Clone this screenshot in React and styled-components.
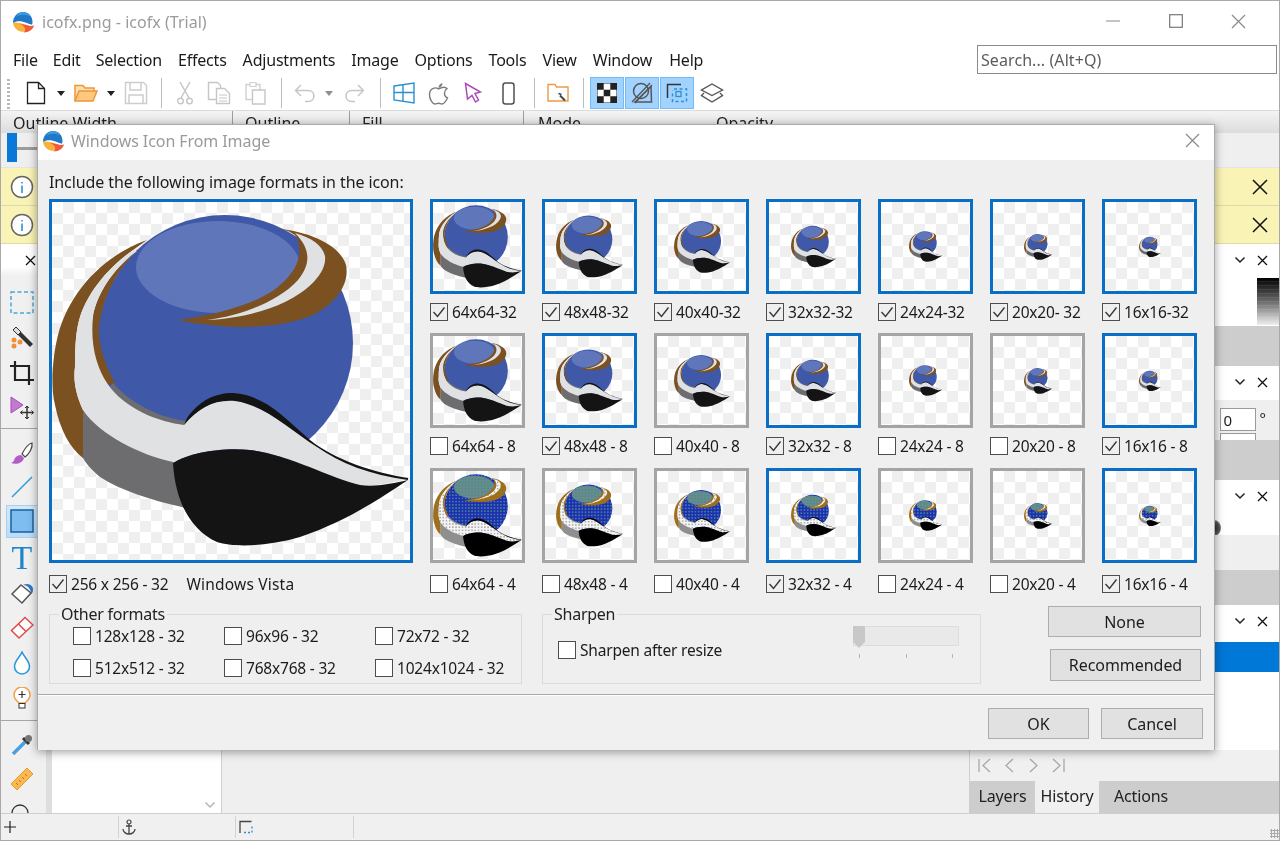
import React from "react";
import styled, { createGlobalStyle } from "styled-components";

const Global = createGlobalStyle`
  html, body { margin: 0; padding: 0; background: #fff; overflow: hidden; }
  body { font-family: "Noto Sans", "Open Sans", sans-serif; color: #1c1c1c; }
  * { box-sizing: border-box; }
`;

const Window = styled.div`
  position: relative; width: 1280px; height: 841px; display: flex; flex-direction: column;
  border: 1px solid #a9a9a9; overflow: hidden; background: #fff;
  filter: blur(0.4px);
`;
const TitleBar = styled.div`
  height: 41px; flex: none; display: flex; align-items: center; padding-left: 11px; padding-top: 1px;
`;
const TitleText = styled.span`
  margin-left: 8px; font-size: 16px; color: #9b9b9b; letter-spacing: 0.03px;
`;
const WinControls = styled.div`margin-left: auto; display: flex; align-items: center; margin-top: -2px;`;
const WinControl = styled.div`
  width: 63px; display: flex; justify-content: center; align-items: center;
`;
const WinSpacer = styled.div`width: 9px;`;
const MenuRow = styled.div`
  height: 35px; flex: none; display: flex; align-items: center; padding-left: 12px;
`;
const MenuItem = styled.span`
  font-size: 16px; margin-right: ${p => p.$gap}px; color: #1a1a1a; letter-spacing: -0.2px;
`;
const SearchBox = styled.div`
  margin-left: auto; margin-right: 2px; width: 300px; height: 29px; border: 1px solid #8b8b8b;
  font-size: 16px; color: #5c5c5c; display: flex; align-items: center; padding-left: 3px; letter-spacing: 0.08px;
`;
const Toolbar = styled.div`
  height: 34px; flex: none; display: flex; align-items: stretch; padding-left: 6px; border-bottom: 1px solid #dcdcdc;
`;
const Grip = styled.div`
  width: 3px; margin: 2px 10px 0 0; background: repeating-linear-gradient(#b9b9b9 0 2px, transparent 2px 4px);
`;
const ToolSlot = styled.div`
  width: ${p => p.$w}px; flex: none; display: flex; align-items: center; justify-content: center;
  margin-right: ${p => p.$on ? 1 : 0}px;
  background: ${p => p.$on ? "#a2d3ff" : "transparent"};
  border: ${p => p.$on ? "1.5px solid #73bbf6" : "none"};
  margin-bottom: 1px;
`;
const ToolSep = styled.div`width: 1px; height: 30px; background: #bdbdbd;`;
const OptionHead = styled.div`
  height: 22px; flex: none; display: flex; align-items: center;
  background: linear-gradient(#f4f4f4, #dcdcdc); font-size: 16px; color: #222;
`;
const OptionCell = styled.div`
  width: ${p => p.$w}px; flex: none; padding-left: ${p => p.$pad ?? 12}px; padding-top: 1px; height: 100%;
  border-right: ${p => p.$end ? "none" : "1px solid #9d9d9d"};
`;
const OptionRow = styled.div`
  height: 35px; flex: none; background: #efefef; display: flex; align-items: flex-start; padding-left: 6px;
  border-bottom: 1px solid #e4e4e4;
`;
const SliderKnob = styled.div`width: 10px; height: 29px; background: #0a78d7;`;
const SliderLine = styled.div`width: 60px; height: 3px; background: #9c9c9c; margin-top: 14px;`;
const Notice = styled.div`
  height: 38px; flex: none; background: #f9f3b6; border-bottom: 1px solid #dfdaa6;
  display: flex; align-items: center; justify-content: space-between; padding: 0 11px 0 9px;
`;
const Workspace = styled.div`flex: 1; min-height: 0; display: flex; background: #efefef;`;
const ToolCol = styled.div`
  width: 45px; flex: none; display: flex; flex-direction: column; overflow: hidden; background: #f0f0f0;
`;
const TabHead = styled.div`
  height: 32px; flex: none; background: linear-gradient(#fff, #fff 70%, #f0f0f0); display: flex; align-items: center;
  padding-left: 24px;
`;
const ToolList = styled.div`display: flex; flex-direction: column; padding-top: 9px; padding-left: 5px; flex: none;`;
const ToolItem = styled.div`
  position: relative; height: ${p => p.$h}px; flex: none; display: flex; align-items: center; justify-content: center; width: 32px;
  &::after {
    content: ""; display: ${p => p.$corner ? "block" : "none"}; position: absolute; right: -3px; bottom: 5px;
    border-style: solid; border-width: 0 0 4px 4px; border-color: transparent transparent #9a9a9a transparent;
  }
`;
const ToolSelected = styled.div`
  width: 32px; height: 33px; background: linear-gradient(#d3e9fc, #bcdcf8); border: 1px solid #a6d0f3;
  display: flex; align-items: center; justify-content: center;
`;
const BigT = styled.span`
  font-family: "Liberation Serif", serif; font-size: 34px; color: #1f86cc; line-height: 1;
`;
const ToolDivider = styled.div`height: 1px; background: #a6a6a6; margin: ${p => p.$m}; flex: none; width: 45px; margin-left: -5px;`;
const Gutter = styled.div`width: 6px; flex: none; background: #dedede;`;
const SidePanel = styled.div`
  width: 170px; flex: none; background: #fff; border-right: 1px solid #cfcfcf; display: flex; flex-direction: column;
  justify-content: flex-end; align-items: flex-end; padding: 0 5px 4px 0;
`;
const Center = styled.div`flex: 1; background: #efefef;`;
const Dock = styled.div`
  width: 310px; flex: none; display: flex; flex-direction: column; border-left: 1px solid #cfcfcf;
`;
const DockBand = styled.div`
  height: ${p => p.$h}px; flex: none; background: ${p => p.$bg}; overflow: hidden;
`;
const DockBandHead = styled.div`
  height: 32px; display: flex; justify-content: flex-end; align-items: center; gap: 11px; padding-right: 11px; background: #fff;
`;
const Gradient = styled.div`
  width: 22px; height: 47px; margin-left: auto; margin-top: 2px;
  background: repeating-linear-gradient(transparent 0 3px, rgba(255,255,255,.08) 3px 4px), linear-gradient(#000 0%, #333 25%, #777 55%, #c8c8c8 85%, #eee 100%);
`;
const AngleRow = styled.div`
  display: flex; justify-content: flex-end; gap: 4px; padding: 8px 13px 0 0; font-size: 15px;
`;
const AngleInput = styled.div`
  width: 36px; height: 23px; border: 1px solid #9a9a9a; background: #fff; padding-left: 3px; font-size: 15px; line-height: 22px;
`;
const AngleStub = styled.div`
  width: 36px; height: 10px; border: 1px solid #9a9a9a; background: #fff; margin: 2px 23px 0 auto;
`;
const Blob = styled.div`
  width: 14px; height: 16px; border-radius: 50%; background: radial-gradient(#2a2a2a, #555 55%, #ddd);
  margin: 8px 58px 0 auto;
`;
const NavRow = styled.div`
  height: 31px; flex: none; background: #f0f0f0; display: flex; align-items: center; gap: 9px; padding-left: 8px;
`;
const Tabs = styled.div`
  height: 32px; flex: none; background: #cdcdcd; display: flex;
`;
const Tab = styled.div`
  width: ${p => p.$w}px; display: flex; align-items: center; justify-content: center; font-size: 16px; letter-spacing: -0.15px;
  background: ${p => p.$on ? "#f0f0f0" : "transparent"}; color: #222; padding-bottom: 2px;
`;
const StatusBar = styled.div`
  height: 27px; flex: none; background: #f0f0f0; border-top: 1px solid #cfcfcf; display: flex; align-items: center;
`;
const StatusCell = styled.div`
  width: ${p => p.$w}px; height: 22px; flex: none; border-right: 1px solid #d2d2d2; display: flex; align-items: center; padding-left: ${p => p.$pad}px;
`;
const SizeGrip = styled.div`
  margin-left: auto; width: 9px; height: 9px; align-self: flex-end; margin-bottom: 2px;
  background: radial-gradient(#a8a8a8 1px, transparent 1.2px) 0 0/3px 3px;
`;

const Dialog = styled.div`
  position: absolute; left: 36px; top: 123px; width: 1178px; height: 626px; background: #efefef;
  border: 1px solid #ababab; box-shadow: 0 2px 9px rgba(0,0,0,.38); display: flex; flex-direction: column;
`;
const DialogTitle = styled.div`
  height: 35px; flex: none; background: #fff; display: flex; align-items: center; padding: 0 14px 4px 4px; justify-content: space-between;
`;
const DialogTitleLeft = styled.div`display: flex; align-items: center;`;
const DialogTitleText = styled.span`font-size: 16px; color: #9a9a9a; margin-left: 7px; letter-spacing: -0.08px;`;
const DialogBody = styled.div`
  flex: 1; padding: 0 0 0 11px; display: flex; flex-direction: column;
`;
const Heading = styled.div`
  height: 39px; padding-top: 12px; font-size: 16px; line-height: 20px; color: #1c1c1c; letter-spacing: -0.1px;
`;
const MainRow = styled.div`display: flex; gap: 17px; height: 405px; flex: none;`;
const PreviewCol = styled.div`width: 364px; flex: none; display: flex; flex-direction: column;`;
const Checker = styled.div`
  flex: none; display: flex; align-items: center; justify-content: center; border: 3px solid ${p => p.$on ? "#0a6ec6" : "#a4a4a4"};
  background: repeating-conic-gradient(#efefef 0 25%, #fff 0 50%) 0 0/22px 22px;
`;
const BigPreview = styled(Checker)`width: 364px; height: 364px;`;
const Thumb = styled(Checker)`width: 95px; height: 95px;`;
const ThumbGrid = styled.div`
  display: grid; grid-template-columns: repeat(7, 95px); column-gap: 17px; grid-auto-rows: min-content; align-content: start;
`;
const ThumbCell = styled.div`display: flex; flex-direction: column; height: ${p => p.$h}px;`;
const CheckRow = styled.div`
  display: flex; align-items: center; gap: ${p => p.$gap ?? 4}px; height: 18px; font-size: 15.5px; letter-spacing: -0.2px; color: #1c1c1c; white-space: nowrap;
  margin-top: ${p => p.$mt ?? 0}px;
`;
const Box = styled.div`
  width: 18px; height: 18px; flex: none; border: 1.5px solid #4d4d4d; background: ${p => p.$checked ? "#efefef" : "#fff"};
  display: flex; align-items: center; justify-content: center;
`;
const Note = styled.span`margin-left: 14px; letter-spacing: 0.2px;`;
const GroupRow = styled.div`display: flex; height: 80px; flex: none;`;
const Group = styled.fieldset`
  margin: 0 20px 0 0; padding: 0; width: ${p => p.$w}px; height: 80px; flex: none; border: 1px solid #dbdbdb;
  min-inline-size: 0;
`;
const Legend = styled.legend`
  margin-left: 9px; padding: 0 2px; font-size: 16px; line-height: 20px; letter-spacing: -0.25px; color: #222; height: 20px;
`;
const OtherGrid = styled.div`
  display: grid; grid-template-columns: repeat(3, 151px); row-gap: 14px; padding: 3px 0 0 23px;
`;
const SharpenBody = styled.div`
  display: flex; justify-content: space-between; padding: 2px 21px 0 15px; align-items: flex-start;
`;
const SharpenCheck = styled.div`padding-top: 15px;`;
const Slider = styled.div`width: 106px; position: relative; height: 34px;`;
const SliderTrack = styled.div`height: 20px; background: #e9e9e9; border: 1px solid #dcdcdc;`;
const SliderThumb = styled.div`
  position: absolute; left: 0; top: 0; width: 12px; height: 22px; background: #c8c8c8;
  clip-path: polygon(0 0, 100% 0, 100% 72%, 50% 100%, 0 72%);
`;
const SliderTicks = styled.div`display: flex; justify-content: space-between; padding: 8px 6px 0;`;
const Tick = styled.div`width: 1px; height: 4px; background: #b5b5b5;`;
const SideButtons = styled.div`
  display: flex; flex-direction: column; align-items: flex-end; width: 153px; margin-left: 47px; margin-top: 2px; gap: 12px; flex: none;
`;
const Button = styled.div`
  width: ${p => p.$w}px; height: ${p => p.$h ?? 31}px; background: #e1e1e1; border: 1.5px solid #adadad;
  display: flex; align-items: center; justify-content: center; font-size: 16px; letter-spacing: -0.05px; color: #1c1c1c;
`;
const Footer = styled.div`
  height: 56px; flex: none; border-top: 1px solid #a9a9a9; box-shadow: inset 0 1px 0 #fff; display: flex; justify-content: flex-end; gap: 12px;
  padding: 13px 11px 0 0; background: #f0f0f0; margin-left: -11px; margin-top: 10px;
`;

const S = p => <svg width={p.w} height={p.h} viewBox={`0 0 ${p.w} ${p.h}`} fill="none">{p.children}</svg>;

const AppLogo = ({ size = 22 }) => (
  <svg width={size} height={size} viewBox="0 0 22 22">
    <path d="M1 12a10 10 0 0 0 19 3C15 15 6 10 1 12z" fill="#f7b23c" />
    <path d="M8 13c5 0 9 3 14 1.500-1 4-5 7-10.500 7C15 19 13 15 8 13z" fill="#ee5a3a" />
    <path d="M1 12C1 5.500 5.500 1 11 1c5.500 0 9.500 4 9.500 10 0 1-.2 2-.5 3-4-.5-6-3-10-3.500C6 10 3.500 10.500 1 12z" fill="#1f78c8" />
    <path d="M11 1c3 0 6 1.500 7.500 4.500C14 3 8 3 4 6c1.500-3 4-5 7-5z" fill="#3f9be0" />
    <path d="M13.500 11.500c3 1.500 5 2.500 8 2-1 .6-2 1.200-3 1.200-2 0-3.500-1.700-5-3.200z" fill="#fff" />
  </svg>
);

const X = ({ s = 15, c = "#8a8a8a", w = 1.2 }) => (
  <S w={s} h={s}><path d={`M1 1L${s - 1} ${s - 1}M${s - 1} 1L1 ${s - 1}`} stroke={c} strokeWidth={w} /></S>
);
const Chevron = ({ c = "#222", w = 1.5 }) => (
  <S w={12} h={8}><path d="M1.500 1.500L6 6l4.500-4.500" stroke={c} strokeWidth={w} /></S>
);
const Caret = ({ c = "#222" }) => <S w={8} h={5}><path d="M0 0h8L4 5z" fill={c} /></S>;
const InfoIcon = () => (
  <S w={24} h={24}><circle cx="12" cy="12" r="10.500" fill="#fff" stroke="#666" strokeWidth="1.500" /><path d="M12 7v1.500M12 10.500V18" stroke="#5aa6dc" strokeWidth="2" /></S>
);
const DockHead = () => <DockBandHead><Chevron /><X s={11} c="#111" w={1.3} /></DockBandHead>;

const I = {
  doc: <S w={20} h={24}><path d="M1.500 1.500h11l6 6v15h-17z" fill="#fff" stroke="#222" strokeWidth="1.300" /><path d="M12.500 1.500v6h6" stroke="#222" strokeWidth="1.300" /></S>,
  open: <S w={24} h={20}><path d="M1 18V2.500h8l2 2.500h9v3" fill="#fde0ad" stroke="#f0953a" strokeWidth="1.500" /><path d="M1 18l4-10h18l-4 10z" fill="#fcc97f" stroke="#f0953a" strokeWidth="1.500" /></S>,
  save: <S w={24} h={24}><path d="M1.500 1.500h18l3 3v18h-21z" stroke="#cdcdcd" strokeWidth="1.500" /><path d="M6 2v7h11V2M5 22v-8h14v8" stroke="#cdcdcd" strokeWidth="1.500" /></S>,
  cut: <S w={16} h={24}><path d="M3 1l9 16M13 1L4 17" stroke="#c6c6c6" strokeWidth="1.500" /><circle cx="3.500" cy="20" r="2.800" stroke="#c6c6c6" strokeWidth="1.400" /><circle cx="12.500" cy="20" r="2.800" stroke="#c6c6c6" strokeWidth="1.400" /></S>,
  copy: <S w={24} h={24}><path d="M1.500 1.500h9l3 3v14h-12z" stroke="#c6c6c6" strokeWidth="1.400" /><path d="M9.500 7.500h8l5 5v10h-13z" fill="#fff" stroke="#c6c6c6" strokeWidth="1.400" /><path d="M12 14h8M12 17h8M12 20h8" stroke="#c6c6c6" /></S>,
  paste: <S w={21} h={24}><path d="M1 3.500h14v15H1z" stroke="#d0d0d0" strokeWidth="1.400" /><path d="M5 1.500h6v4H5z" fill="#fff" stroke="#d0d0d0" strokeWidth="1.200" /><path d="M7.500 9h12.500v14H7.500z" fill="#fff" stroke="#c6c6c6" strokeWidth="1.400" /></S>,
  undo: <S w={22} h={19}><path d="M7 1L1.500 6.500 7 12M2 6.500h12c8 0 8 11 0 11h-3" stroke="#c6c6c6" strokeWidth="1.500" /></S>,
  redo: <S w={20} h={19}><path d="M14 1l5.500 5.500L14 12M19 6.500H8c-8 0-8 11 0 11h3" stroke="#c6c6c6" strokeWidth="1.500" /></S>,
  win: <S w={22} h={22}><path d="M1 4l20-3v20L1 18zM1 10.500h20M10 2.800v17" fill="#fff" stroke="#2a8fd4" strokeWidth="1.400" /></S>,
  apple: <S w={21} h={23}><path d="M10.500 7C8 5 2 5.500 1.500 12c-.3 5 3 10 5.500 10 1.500 0 2-.8 3.500-.8s2 .8 3.500.8c2 0 4-3 5.500-6-4-2-4-7-.5-9.500C17 4.500 13 5.500 10.500 7z" stroke="#7b7b7b" strokeWidth="1.400" /><path d="M10.500 6c0-2.500 1.500-4.500 4-5 0 2.500-1.500 4.500-4 5z" fill="#7b7b7b" /></S>,
  cursor: <S w={18} h={22}><path d="M1.500 1.500L16.500 10l-5.500 1.500 3.500 6.500-3 2-3.500-6.500L3.500 17z" fill="#fff" stroke="#a84cb8" strokeWidth="1.500" /></S>,
  phone: <S w={13} h={23}><rect x="1" y="1" width="11" height="21" rx="2.500" fill="#fff" stroke="#505050" strokeWidth="1.500" /></S>,
  toolFolder: <S w={22} h={20}><path d="M1 18V1.500h7l1.500 2.500H21v14z" fill="#fff" stroke="#ec9a48" strokeWidth="1.400" /><path d="M13 12.500l5 5" stroke="#444" strokeWidth="2" /><path d="M11.500 10.500l3 1" stroke="#444" strokeWidth="1.500" /></S>,
  checker: <S w={20} h={20}><rect width="20" height="20" fill="#fff" stroke="#222" /><path d="M0 0h6.700v6.700H0zM13.300 0H20v6.700h-6.700zM6.700 6.700h6.600v6.600H6.700zM0 13.300h6.700V20H0zM13.300 13.300H20V20h-6.700z" fill="#222" /></S>,
  noAlpha: <S w={22} h={22}><circle cx="10" cy="9" r="7.500" stroke="#555" strokeWidth="1.500" /><path d="M4 20L20 4.500 20.500 20z" stroke="#555" strokeWidth="1.500" /><path d="M1 20L19 1M4 21L21 3" stroke="#555" strokeWidth="1.300" /></S>,
  frames: <S w={22} h={20}><path d="M15 1.500H1.500V15" stroke="#333" strokeWidth="1.500" /><path d="M8 6h12.500v12.500H6.500V7.500" stroke="#2a8fd4" strokeWidth="1.500" strokeDasharray="3 2.500" /><rect x="10" y="8.500" width="5" height="5" stroke="#2a8fd4" strokeWidth="1.300" /></S>,
  layers: <S w={24} h={20}><path d="M12 1l10.500 6L12 12.500 1.500 7z" fill="#fff" stroke="#555" strokeWidth="1.400" /><path d="M4 10l-2.500 2.500L12 19l10.500-6.500L20 10" stroke="#555" strokeWidth="1.400" /></S>,
};

const toolbarItems = [
  { w: 32, i: I.doc }, { w: 18, i: <Caret /> }, { w: 32, i: I.open }, { w: 18, i: <Caret /> }, { w: 32, i: I.save },
  { w: 18, sep: true }, { w: 30, i: I.cut }, { w: 38, i: I.copy }, { w: 34, i: I.paste }, { w: 18, sep: true },
  { w: 30, i: I.undo }, { w: 18, i: <Caret c="#8e8e8e" /> }, { w: 32, i: I.redo }, { w: 20, sep: true },
  { w: 28, i: I.win }, { w: 40, i: I.apple }, { w: 30, i: I.cursor }, { w: 40, i: I.phone }, { w: 12, sep: true },
  { w: 36, i: I.toolFolder }, { w: 14, sep: true },
  { w: 34, i: I.checker, on: true }, { w: 34, i: I.noAlpha, on: true }, { w: 34, i: I.frames, on: true }, { w: 34, i: I.layers },
];

const menu = [
  ["File", 15], ["Edit", 15], ["Selection", 16], ["Effects", 16], ["Adjustments", 16], ["Image", 16],
  ["Options", 16], ["Tools", 16], ["View", 16], ["Window", 17], ["Help", 0],
];

const leftTools = [
  { h: 35, c: 1, i: <S w={24} h={24}><rect x="1" y="1" width="22" height="21" stroke="#4aa5d8" strokeWidth="1.500" strokeDasharray="4 2.500" /></S> },
  { h: 35, c: 1, i: <S w={24} h={24}><path d="M8 3l15 15-3 3L5 6z" fill="#333" /><path d="M6 1l5 5-3 3-5-5z" fill="#ddd" stroke="#333" /><g fill="#f0913a"><circle cx="4" cy="14" r="2.500" /><circle cx="10" cy="16" r="2.500" /><circle cx="4" cy="20" r="2.500" /></g></S> },
  { h: 35, i: <S w={24} h={24}><path d="M5 0v19h19M0 5h19v19" stroke="#222" strokeWidth="2.200" /></S> },
  { h: 35, i: <S w={24} h={24}><path d="M1 1l12 8-12 8z" fill="#c07ad0" stroke="#a84cb8" /><path d="M17 10v13M10.500 16.500h13" stroke="#333" strokeWidth="1.500" /><path d="M15 12l2-2 2 2M15 21l2 2 2-2M12.500 14.500l-2 2 2 2M21.500 14.500l2 2-2 2" stroke="#333" /></S> },
  { div: "3px 0 8px" },
  { h: 34, c: 1, i: <S w={24} h={24}><path d="M22 1c1 5-3 11-7 14l-3-3c2-4 6-10 10-11z" fill="#fff" stroke="#444" strokeWidth="1.200" /><path d="M11 13l3 3c-1 5-8 7-13 5 3-1 3-3 4-5 1-2 4-3 6-3z" fill="#b35cc6" /></S> },
  { h: 32, c: 1, i: <S w={22} h={22}><path d="M1 21L21 1" stroke="#2a9ad8" strokeWidth="1.500" /></S> },
  { h: 36, sel: true },
  { h: 38, i: <BigT>T</BigT> },
  { h: 34, c: 1, i: <S w={24} h={22}><path d="M11 2l10 8-9 10-10-9z" fill="#fff" stroke="#555" strokeWidth="1.500" /><path d="M13 2c5 0 8 4 8 9 2-1 2-3 2-5 0-3-4-7-10-4z" fill="#2a79c4" /></S> },
  { h: 34, c: 1, i: <S w={24} h={24}><path d="M15 1.500L23 9 9 22 1.500 14.500z" fill="#fff" stroke="#e04b4b" strokeWidth="1.500" /><path d="M8.500 8l7.500 7.500" stroke="#e04b4b" strokeWidth="1.500" /></S> },
  { h: 36, c: 1, i: <S w={18} h={24}><path d="M9 1c2 5 7.500 9 7.500 14.500a7.500 7.500 0 0 1-15 0C1.500 10 7 6 9 1z" fill="#fff" stroke="#2a9ad8" strokeWidth="1.600" /></S> },
  { h: 34, c: 1, i: <S w={18} h={22}><path d="M6 16c-2-2-5-4-5-8a8 8 0 0 1 16 0c0 4-3 6-5 8z" fill="#fff" stroke="#f0a04a" strokeWidth="1.500" /><path d="M9 4v7M5.500 7.500h7" stroke="#333" strokeWidth="1.200" /><rect x="6" y="16.500" width="6" height="4.500" fill="#fff" stroke="#333" /></S> },
  { div: "5px 0 7px" },
  { h: 34, i: <S w={22} h={22}><path d="M14 8L2 20" stroke="#4a9fe0" strokeWidth="3.500" /><path d="M12 4l6 6" stroke="#333" strokeWidth="3" /><circle cx="17.500" cy="4.500" r="3.500" fill="#777" /></S> },
  { h: 34, i: <S w={24} h={24}><path d="M17 1l6 6L7 23l-6-6z" fill="#fbb850" stroke="#e99a34" /><path d="M6 16l2 2M9 13l2 2M12 10l2 2M15 7l2 2" stroke="#b87a20" /></S> },
  { h: 38, i: <S w={24} h={24}><circle cx="10" cy="10" r="8" stroke="#333" strokeWidth="1.300" /></S> },
];

const fillsNormal = { blue: "#3f59a8", light: "#5f77ba", brown: "#7b5122", white: "#e0e1e3", gray: "#6d6d70", black: "#141414" };

const Logo = ({ px, dither }) => {
  const k = `d${px}`;
  const u = (358 / px) * 1.6;
  const f = dither
    ? { blue: `url(#${k}b)`, light: `url(#${k}l)`, brown: `url(#${k}r)`, white: `url(#${k}w)`, gray: "#8f8f8f", black: "#000" }
    : fillsNormal;
  return (
    <svg width={px} height={px} viewBox="52 202 358 358">
      {dither && (
        <defs>
          {[["b", "#1f2fb4", "#3f8090"], ["l", "#5f8f90", "#66807f"], ["r", "#a86a10", "#808040"], ["w", "#f4f4f4", "#b0b0b0"]].map(([n, a, c]) => (
            <pattern key={n} id={k + n} patternUnits="userSpaceOnUse" width={u * 2} height={u * 2}>
              <rect width={u * 2} height={u * 2} fill={a} />
              <rect width={u} height={u} fill={c} />
            </pattern>
          ))}
        </defs>
      )}
      <circle cx="225" cy="343" r="128" fill={f.blue} />
      <ellipse cx="218" cy="267" rx="82" ry="46" fill={f.light} />
      <path d="M178 320C220 314 262 302 280 285 298 270 304 252 296 236 290 231 285 230 280 229 310 232 340 245 346 265 350 285 335 303 315 314 280 330 225 330 178 320Z" fill={f.brown} />
      <path d="M207 320C245 315 280 300 298 280 310 265 312 250 295 233 312 238 322 245 325 256 327 272 310 290 285 302 262 313 232 319 207 320Z" fill={f.white} />
      <path d="M147 240C105 255 70 290 58 335 53 355 50 385 55 405 60 430 70 448 83 458L83 410C76 395 73 380 75 367 75 345 76 330 80 317 87 295 105 270 133 250Z" fill={f.brown} />
      <path d="M138 250C118 268 103 295 99 327 98 345 105 365 115 383L107 385C95 365 90 345 92 320 96 295 112 270 137 250Z" fill={f.brown} />
      <path d="M113 383C130 403 160 418 186 421L183 430 140 422 105 392Z" fill={f.gray} />
      <path d="M137 251C112 270 96 295 93 317 90 345 97 368 107 383 125 410 160 422 184 425 196 410 215 398 235 400 265 405 290 430 317 445 340 460 370 472 408 479 385 484 372 487 360 485 330 478 290 455 250 450 225 447 190 452 173 463 140 455 100 435 83 410 76 395 73 380 75 367 75 345 76 330 80 317 87 295 105 270 133 250Z" fill={f.white} />
      <path d="M83 410C100 435 140 455 173 462L195 480 195 512 182 507C150 500 120 490 100 477 92 470 87 465 83 458Z" fill={f.gray} />
      <path d="M187 418C200 400 215 393 233 393 265 395 285 418 310 440 335 460 375 473 408 478L408 480C370 475 340 463 317 447 290 430 265 405 235 401 215 399 198 408 184 425Z" fill={f.black} />
      <path d="M173 463C190 452 225 447 250 450 290 455 330 478 360 485 375 487 390 484 408 480 385 495 350 520 300 537 270 546 235 548 217 542 190 530 175 500 173 463Z" fill={f.black} />
    </svg>
  );
};

const Check = ({ checked }) => (
  <Box $checked={checked}>
    {checked && <S w={14} h={12}><path d="M1.500 6l4 4.500L12.500 1.500" stroke="#333" strokeWidth="1.300" /></S>}
  </Box>
);

const sizes = [64, 48, 40, 32, 24, 20, 16];
const rows = [
  { sfx: "-32", on: [1, 1, 1, 1, 1, 1, 1], h: 134, mt: 9 },
  { sfx: " - 8", on: [0, 1, 0, 1, 0, 0, 1], h: 135, mt: 9 },
  { sfx: " - 4", on: [0, 0, 0, 1, 0, 0, 1], h: 135, mt: 12, dither: true },
];

const others = ["128x128 - 32", "96x96 - 32", "72x72 - 32", "512x512 - 32", "768x768 - 32", "1024x1024 - 32"];

export default function App() {
  return (
    <>
      <Global />
      <Window>
        <TitleBar>
          <AppLogo />
          <TitleText>icofx.png - icofx (Trial)</TitleText>
          <WinControls>
            <WinControl><S w={14} h={2}><path d="M0 1h14" stroke="#8a8a8a" /></S></WinControl>
            <WinControl><S w={14} h={14}><rect x=".7" y=".7" width="12.600" height="12.600" stroke="#777" strokeWidth="1.200" /></S></WinControl>
            <WinControl><X s={15} /></WinControl>
            <WinSpacer />
          </WinControls>
        </TitleBar>
        <MenuRow>
          {menu.map(([m, g]) => <MenuItem key={m} $gap={g}>{m}</MenuItem>)}
          <SearchBox>Search... (Alt+Q)</SearchBox>
        </MenuRow>
        <Toolbar>
          <Grip />
          {toolbarItems.map((t, i) => (
            <ToolSlot key={i} $w={t.w} $on={t.on}>{t.sep ? <ToolSep /> : t.i}</ToolSlot>
          ))}
        </Toolbar>
        <OptionHead>
          <OptionCell $w={232}>Outline Width</OptionCell>
          <OptionCell $w={117}>Outline</OptionCell>
          <OptionCell $w={174}>Fill</OptionCell>
          <OptionCell $w={180} $end $pad={14}>Mode</OptionCell>
          <OptionCell $w={200} $end>Opacity</OptionCell>
        </OptionHead>
        <OptionRow>
          <SliderKnob />
          <SliderLine />
        </OptionRow>
        <Notice>
          <InfoIcon />
          <X s={16} c="#111" w={1.5} />
        </Notice>
        <Notice>
          <InfoIcon />
          <X s={16} c="#111" w={1.5} />
        </Notice>
        <Workspace>
          <ToolCol>
            <TabHead><X s={11} c="#111" w={1.3} /></TabHead>
            <ToolList>
              {leftTools.map((t, i) => t.div
                ? <ToolDivider key={i} $m={t.div} />
                : (
                  <ToolItem key={i} $h={t.h} $corner={!!t.c}>
                    {t.sel
                      ? <ToolSelected><S w={24} h={24}><rect x="1" y="1" width="22" height="22" fill="#7dbdf0" stroke="#17629f" strokeWidth="1.500" /></S></ToolSelected>
                      : t.i}
                  </ToolItem>
                ))}
            </ToolList>
          </ToolCol>
          <Gutter />
          <SidePanel><Chevron c="#b5b5b5" /></SidePanel>
          <Center />
          <Dock>
            <DockBand $h={82} $bg="#fff">
              <DockHead />
              <Gradient />
            </DockBand>
            <DockBand $h={40} $bg="#cdcdcd" />
            <DockBand $h={34} $bg="#fff"><DockHead /></DockBand>
            <DockBand $h={40} $bg="#efefef">
              <AngleRow><AngleInput>0</AngleInput><span>°</span></AngleRow>
              <AngleStub />
            </DockBand>
            <DockBand $h={40} $bg="#cdcdcd" />
            <DockBand $h={55} $bg="#fff">
              <DockHead />
              <Blob />
            </DockBand>
            <DockBand $h={35} $bg="#efefef" />
            <DockBand $h={35} $bg="#cdcdcd" />
            <DockBand $h={37} $bg="#fff"><DockHead /></DockBand>
            <DockBand $h={30} $bg="#0078d7" />
            <DockBand $h={78} $bg="#fff" />
            <NavRow>
              <S w={15} h={15}><path d="M1 1v13M12 1L5 7.500l7 6.500" stroke="#a8a8a8" strokeWidth="1.300" /></S>
              <S w={15} h={15}><path d="M11 1L4 7.500l7 6.500" stroke="#a8a8a8" strokeWidth="1.300" /></S>
              <S w={15} h={15}><path d="M4 1l7 6.500L4 14" stroke="#a8a8a8" strokeWidth="1.300" /></S>
              <S w={15} h={15}><path d="M14 1v13M3 1l7 6.500L3 14" stroke="#a8a8a8" strokeWidth="1.300" /></S>
            </NavRow>
            <Tabs>
              <Tab $w={65}>Layers</Tab>
              <Tab $w={64} $on>History</Tab>
              <Tab $w={84}>Actions</Tab>
            </Tabs>
          </Dock>
        </Workspace>
        <StatusBar>
          <StatusCell $w={118} $pad={2}><S w={14} h={14}><path d="M7 1v12M1 7h12" stroke="#222" strokeWidth="1.200" /></S></StatusCell>
          <StatusCell $w={117} $pad={3}><S w={14} h={16}><circle cx="7" cy="3" r="2" stroke="#444" strokeWidth="1.200" /><path d="M7 5v10M4 7h6M1 10c0 3 3 5 6 5s6-2 6-5" stroke="#444" strokeWidth="1.300" /></S></StatusCell>
          <StatusCell $w={118} $pad={3}><S w={14} h={14}><path d="M1 13V1.500h11.500" stroke="#444" strokeWidth="1.300" /><path d="M5 12.500h8V5" stroke="#2a8fd4" strokeWidth="1.300" strokeDasharray="2 2" /></S></StatusCell>
          <SizeGrip />
        </StatusBar>

        <Dialog>
          <DialogTitle>
            <DialogTitleLeft>
              <AppLogo />
              <DialogTitleText>Windows Icon From Image</DialogTitleText>
            </DialogTitleLeft>
            <X s={15} />
          </DialogTitle>
          <DialogBody>
            <Heading>Include the following image formats in the icon:</Heading>
            <MainRow>
              <PreviewCol>
                <BigPreview $on><Logo px={358} /></BigPreview>
                <CheckRow $mt={12}><Check checked />256 x 256 - 32 <Note>Windows Vista</Note></CheckRow>
              </PreviewCol>
              <ThumbGrid>
                {rows.map((r, ri) => sizes.map((s, si) => {
                  const label = ri === 0 && s === 20 ? "20x20- 32" : `${s}x${s}${r.sfx}`;
                  return (
                    <ThumbCell key={`${ri}-${s}`} $h={r.h}>
                      <Thumb $on={!!r.on[si]}><Logo px={Math.round(s * 89 / 64)} dither={r.dither} /></Thumb>
                      <CheckRow $mt={r.mt}><Check checked={!!r.on[si]} />{label}</CheckRow>
                    </ThumbCell>
                  );
                }))}
              </ThumbGrid>
            </MainRow>
            <GroupRow>
              <Group $w={473}>
                <Legend>Other formats</Legend>
                <OtherGrid>
                  {others.map(o => <CheckRow key={o}><Check />{o}</CheckRow>)}
                </OtherGrid>
              </Group>
              <Group $w={439}>
                <Legend>Sharpen</Legend>
                <SharpenBody>
                  <SharpenCheck><CheckRow><Check />Sharpen after resize</CheckRow></SharpenCheck>
                  <Slider>
                    <SliderTrack />
                    <SliderThumb />
                    <SliderTicks><Tick /><Tick /><Tick /></SliderTicks>
                  </Slider>
                </SharpenBody>
              </Group>
              <SideButtons>
                <Button $w={153}>None</Button>
                <Button $w={151} $h={32}>Recommended</Button>
              </SideButtons>
            </GroupRow>
            <Footer>
              <Button $w={101}>OK</Button>
              <Button $w={102}>Cancel</Button>
            </Footer>
          </DialogBody>
        </Dialog>
      </Window>
    </>
  );
}
